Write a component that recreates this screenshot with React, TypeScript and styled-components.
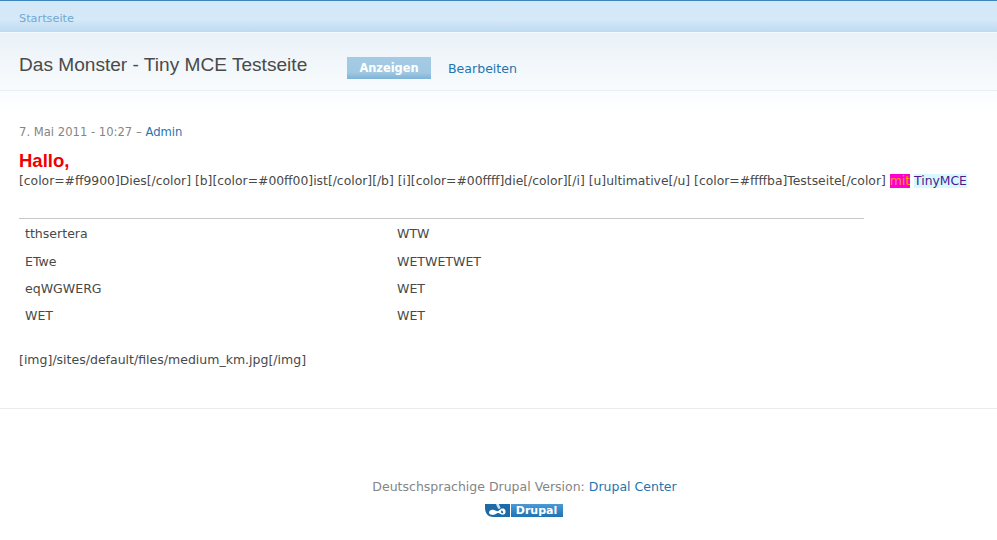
import React from "react";

import styled, { createGlobalStyle } from "styled-components";

const rows: string[][] = [
  ["tthsertera", "WTW"],
  ["ETwe", "WETWETWET"],
  ["eqWGWERG", "WET"],
  ["WET", "WET"],
];

export default function App(): JSX.Element {
  return (
    <>
      <GlobalStyle />
      <Breadcrumb>
        <CrumbLink href="#">Startseite</CrumbLink>
      </Breadcrumb>

      <TitleBar>
        <PageTitle>Das Monster - Tiny MCE Testseite</PageTitle>
        <Tabs>
          <ActiveTab href="#">Anzeigen</ActiveTab>
          <Tab href="#">Bearbeiten</Tab>
        </Tabs>
      </TitleBar>

      <Content>
        <Submitted>
          7. Mai 2011 - 10:27 – <TextLink href="#">Admin</TextLink>
        </Submitted>

        <Greeting>Hallo,</Greeting>
        <Line>
          [color=#ff9900]Dies[/color] [b][color=#00ff00]ist[/color][/b]{" "}
          [i][color=#00ffff]die[/color][/i] [u]ultimative[/u]{" "}
          [color=#ffffba]Testseite[/color] <Mit>mit</Mit>{" "}
          <TinyMce>TinyMCE</TinyMce>
        </Line>

        <DataTable>
          <tbody>
            {rows.map((row) => (
              <tr key={row[0]}>
                <Cell>{row[0]}</Cell>
                <Cell>{row[1]}</Cell>
              </tr>
            ))}
          </tbody>
        </DataTable>

        <ImageCode>[img]/sites/default/files/medium_km.jpg[/img]</ImageCode>
      </Content>

      <Footer>
        <FooterText>
          Deutschsprachige Drupal Version:{" "}
          <TextLink href="#">Drupal Center</TextLink>
        </FooterText>
        <DrupalBadge>
          <DropMark viewBox="0 0 25 13">
            <path d="M0 0H25V13H8C3 13 0 9 0 4Z" fill="#1c6aa8" />
            <path
              d="M4 8.5C4 6.2 6.5 5.2 8.5 5.8C10 6.2 11 7.2 12.5 7.2C14 7.2 15 5 17 4.5C19.5 4 21 6 20.5 8.5C20 10.8 17.5 11.2 15.5 10C14 9.1 13.2 8.7 11.8 9.6C10.2 10.6 8.6 11.2 6.6 10.8C5 10.4 4 9.8 4 8.5Z"
              fill="#fff"
            />
            <path d="M16.5 6.2C17.8 7 18.6 8 18 9C17.2 9.8 15.6 9 16 7.6Z" fill="#1c6aa8" />
            <path d="M11 0H14C14.3 2 15.5 3 15.5 4C15 5 13.5 5 13 4.5C12.5 3 11.5 2 11 0Z" fill="#cfe3f2" />
          </DropMark>
          <BadgeLabel>Drupal</BadgeLabel>
        </DrupalBadge>
      </Footer>
    </>
  );
}

const GlobalStyle = createGlobalStyle`
  html,
  body {
    margin: 0;
    padding: 0;
    background: #fff;
  }

  body {
    color: #494949;
    font-family: "DejaVu Sans", Verdana, sans-serif;
    font-size: 12.36px;
  }

  a {
    text-decoration: none;
  }
`;

const Breadcrumb = styled.div`
  box-sizing: border-box;
  height: 33px;
  padding: 10px 19px 0;
  border-top: 1px solid #3f86bf;
  border-bottom: 1px solid #f4f9fc;

  background: linear-gradient(#d3e8f8 0%, #d5e9f8 60%, #bcdaf1 100%);
`;

const CrumbLink = styled.a`
  color: #6fa8d6;
  font-size: 11.3px;
`;

const TitleBar = styled.div`
  box-sizing: border-box;
  display: flex;
  height: 58px;
  padding: 24px 19px 0;
  border-bottom: 1px solid #e9eef2;

  background: linear-gradient(#eaf2f8, #f8fbfd);
`;

const PageTitle = styled.h1`
  width: 328px;
  margin: 0;

  color: #4a4a4a;
  font-family: "Liberation Sans", Arial, sans-serif;
  font-size: 19.1px;
  font-weight: 400;
  line-height: 16px;
`;

const Tabs = styled.div`
  display: flex;
  gap: 17px;
  height: 22px;
`;

const Tab = styled.a`
  padding-top: 4px;

  color: #1f75b0;
  font-size: 12.55px;
`;

const ActiveTab = styled.a`
  box-sizing: border-box;
  width: 84px;
  height: 22px;
  padding-top: 4px;

  color: #fff;
  font-size: 11.4px;
  font-weight: 700;
  text-align: center;

  background: linear-gradient(#a5cbe4 0%, #a0c8e2 70%, #7eb3d8 100%);
`;

const Content = styled.div`
  box-sizing: border-box;
  height: 318px;
  padding: 0 19px;
  border-bottom: 1px solid #e8ecef;

  background: linear-gradient(#fafcfe 0, #fff 24px);
`;

const Submitted = styled.div`
  padding-top: 34px;

  color: #858585;
  font-size: 11.6px;
  line-height: 14px;
`;

const TextLink = styled.a`
  color: #1f75b0;
`;

const Greeting = styled.div`
  margin-top: 12px;

  color: #f00000;
  font-family: "Liberation Sans", Arial, sans-serif;
  font-size: 18.5px;
  font-weight: 700;
  line-height: 19px;
`;

const Line = styled.div`
  margin-top: 4px;

  line-height: 15px;
  white-space: nowrap;
`;

const Mit = styled.span`
  color: #ff9900;

  background: #ff00d4;
`;

const TinyMce = styled.span`
  color: #4b1a90;

  background: #d8f8ff;
`;

const DataTable = styled.table`
  width: 845px;
  margin-top: 29px;
  border-top: 1px solid #c8c8c8;
  border-collapse: collapse;
  table-layout: fixed;
  font-size: 12.55px;
`;

const Cell = styled.td`
  box-sizing: border-box;
  width: 372px;
  height: 27.4px;
  padding: 3px 6px 0;

  &:last-child {
    width: auto;
  }
`;

const ImageCode = styled.div`
  margin-top: 24px;

  font-size: 12.53px;
  line-height: 15px;
`;

const Footer = styled.div`
  padding: 70px 0 0 52px;
  text-align: center;
`;

const FooterText = styled.div`
  color: #858585;
  font-size: 12.5px;
  line-height: 16px;
`;

const DrupalBadge = styled.div`
  display: flex;
  justify-content: center;
  gap: 1px;
  height: 13px;
  margin-top: 9px;
  padding-right: 2px;
`;

const DropMark = styled.svg`
  display: block;
  width: 25px;
  height: 13px;
`;

const BadgeLabel = styled.div`
  width: 52px;

  color: #fff;
  font-size: 11px;
  font-weight: 700;
  line-height: 13px;

  background: linear-gradient(#4a9ad6, #1f72b4);
`;
